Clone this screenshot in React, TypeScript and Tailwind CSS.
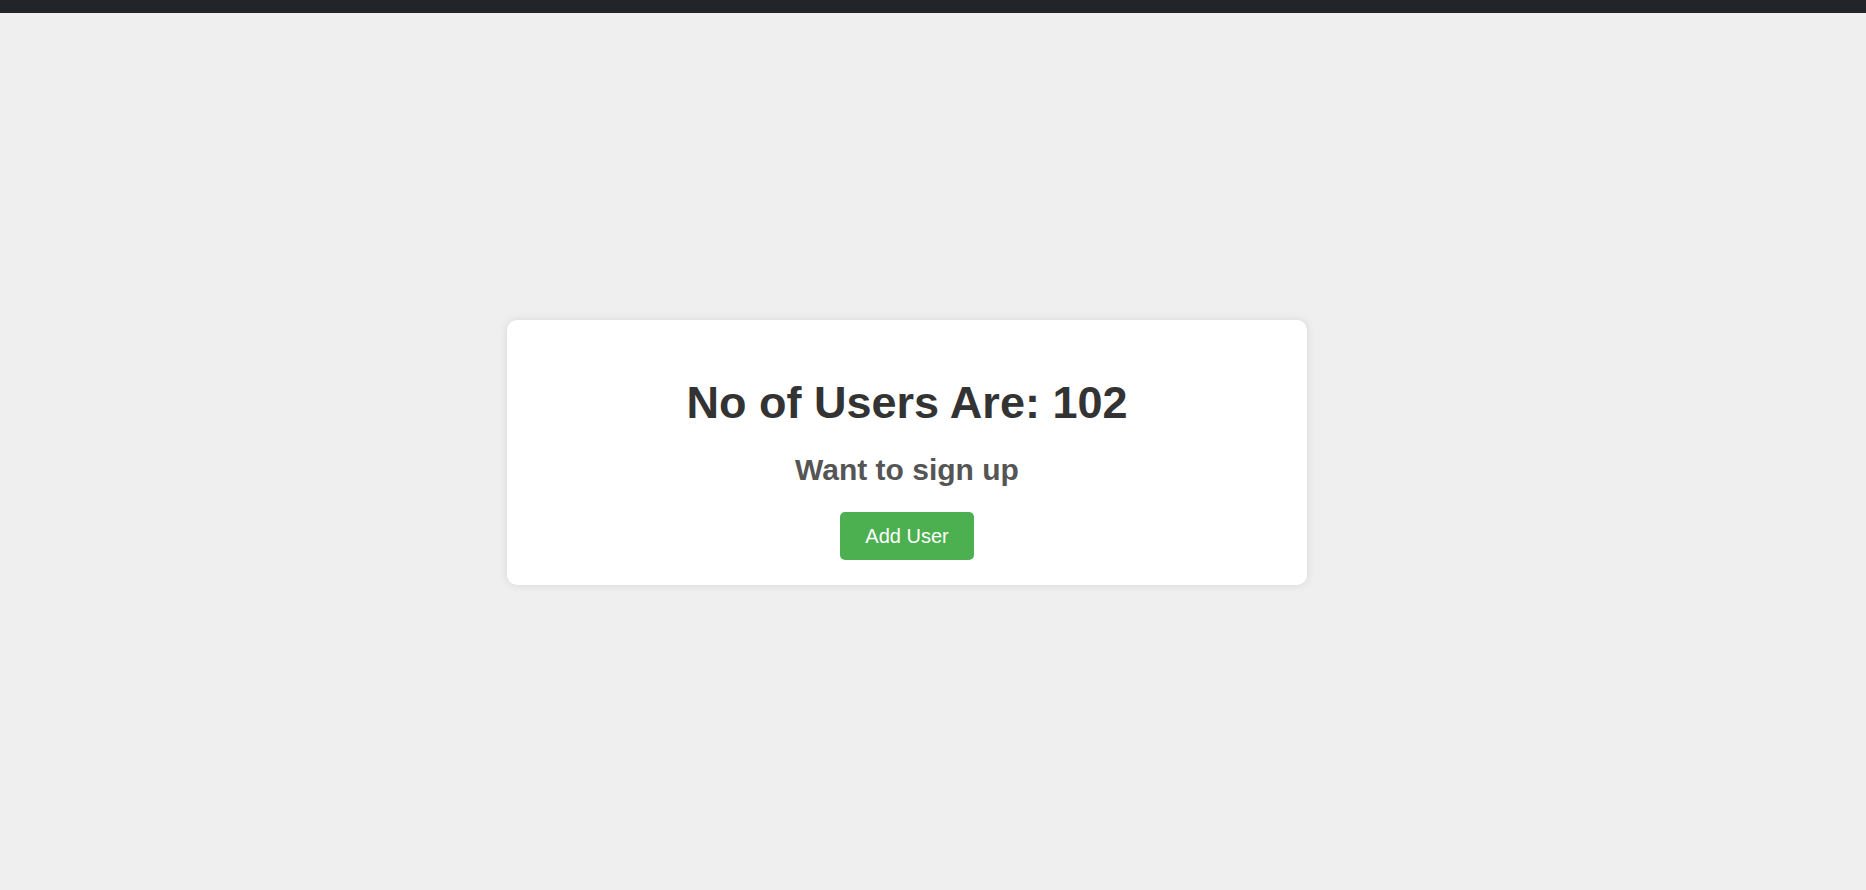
import React from "react";

const App = () => {
    const userCount = 102;

    return (
        <div className="min-h-screen flex flex-col bg-[#efefef]" style={{fontFamily: '"Liberation Sans", Arial, sans-serif'}}>
            {/* Top bar */}
            <div className="h-[13px] bg-[#212529]"/>

            {/* Centered card */}
            <main className="flex-1 flex items-center justify-center pr-[52px] pt-[2px]">
                <div className="w-[800px] bg-white rounded-[10px] shadow-[0_0_10px_rgba(0,0,0,0.1)] pt-[57px] pb-[25px] flex flex-col items-center">
                    <h1 className="text-[45px] leading-[52px] font-bold text-[#333333]">
                        No of Users Are: {userCount}
                    </h1>
                    <h2 className="mt-[24px] text-[30px] leading-[34px] font-bold text-[#555555]">
                        Want to sign up
                    </h2>
                    <button className="mt-[25px] h-[48px] px-[25px] rounded-[5px] bg-[#4caf50] text-white text-[20px] leading-[23px]">
                        Add User
                    </button>
                </div>
            </main>
        </div>
    );
};

export default App;
